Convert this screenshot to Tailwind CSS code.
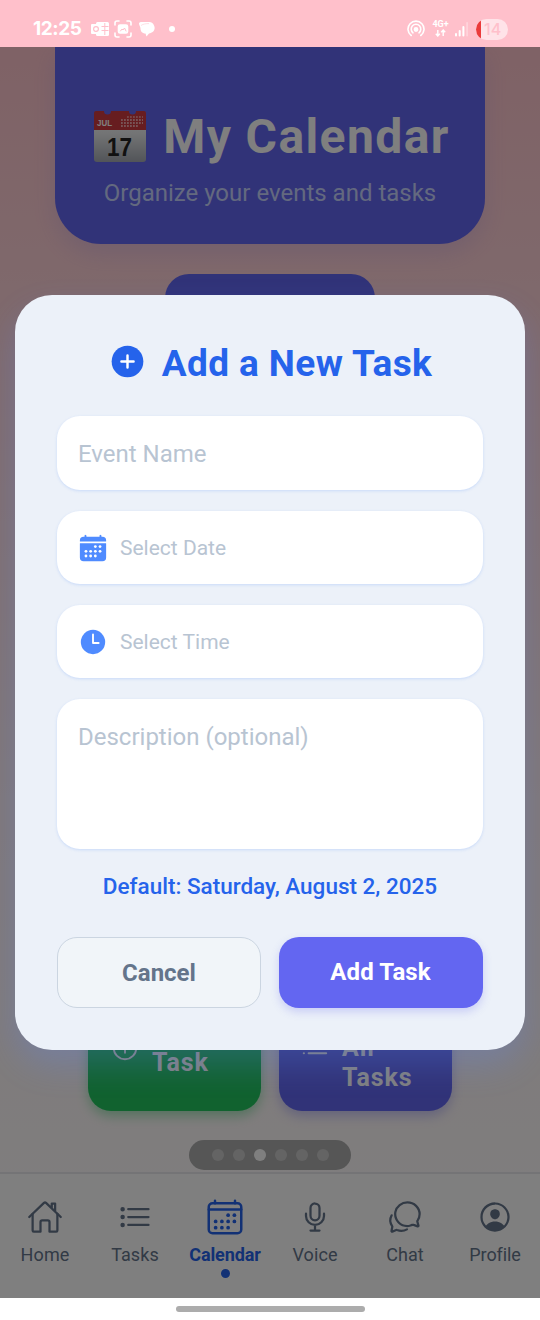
<!DOCTYPE html>
<html lang="en">
<head>
    <meta charset="UTF-8">
    <meta name="viewport" content="width=device-width, initial-scale=1.0">
    <title>My Calendar</title>
    <script src="https://cdn.jsdelivr.net/npm/@tailwindcss/browser@4"></script>
</head>
<body class="w-[540px] h-[1320px] overflow-hidden flex flex-col bg-white font-['Roboto',sans-serif]">

    <!-- Status bar -->
    <div class="h-[47px] shrink-0 bg-[#ffc0cb] flex items-center justify-between pl-[33px] pr-8 pt-[11px] text-white">
        <div class="flex items-center">
            <span class="w-[49px] text-[19px] leading-6 font-bold font-['Inter',sans-serif] tracking-[-0.4px] whitespace-nowrap">12:25</span>
            <svg class="ml-[9px] w-[18px] h-[18px]" viewBox="0 0 18 18" fill="none">
                <rect x="5" y="2" width="13" height="14" rx="1.5" fill="#fff"/>
                <rect x="0" y="4" width="10" height="10" rx="1" fill="#fff"/>
                <circle cx="5" cy="9" r="2.4" stroke="#ffc0cb" stroke-width="1.2"/>
                <path d="M10.5 6.5h7M10.5 10.5h7M13.8 3v12" stroke="#ffc0cb"/>
            </svg>
            <svg class="ml-[5px] w-[18px] h-[18px]" viewBox="0 0 18 18" fill="none" stroke="#fff" stroke-width="1.6" stroke-linecap="round">
                <path d="M1 5V3a2 2 0 012-2h2M13 1h2a2 2 0 012 2v2M17 13v2a2 2 0 01-2 2h-2M5 17H3a2 2 0 01-2-2v-2"/>
                <rect x="4.500" y="5" width="9" height="8" rx="1.500" fill="#fff"/>
                <path d="M6.500 11l1.500-2 1 1 1.500-2 1.500 3" stroke="#ffc0cb" stroke-width="1"/>
            </svg>
            <svg class="ml-[7px] w-[16px] h-[16px]" viewBox="0 0 16 16" fill="#fff">
                <path d="M3 1h7a5 5 0 015 3.500c2 4-1 7.500-5 8l-2.500 3-1-3C3 12.500 1.500 10 1.500 7.500 1.500 6 0 4 0 2.500 0 1.500 1 1 3 1z"/>
                <path d="M2 4.500C4 3 7 2.600 10 2.600" stroke="#ffc0cb" stroke-width=".5" fill="none"/>
            </svg>
            <span class="ml-[14px] size-[6px] rounded-full bg-white"></span>
        </div>
        <div class="flex items-center">
            <svg class="w-[18px] h-[18px]" viewBox="0 0 18 18" fill="none" stroke="#fff" stroke-width="1.6" stroke-linecap="round">
                <path d="M4.200 15.500A8 8 0 1113.800 15.500"/>
                <path d="M6 12.800A4.800 4.800 0 1112 12.800"/>
                <circle cx="9" cy="9.500" r="1.600" fill="#fff"/>
            </svg>
            <div class="ml-[7px] w-[17px] h-[18px] flex flex-col items-center">
                <span class="text-[9px] leading-[9px] font-bold whitespace-nowrap">4G+</span>
                <svg class="w-[11px] h-[8px]" viewBox="0 0 11 8" fill="none" stroke="#fff" stroke-width="1.400">
                    <path d="M2.800 1v6M.8 4.800l2 2.200 2-2.200M8.200 7V1M6.200 3.200l2-2.200 2 2.200"/>
                </svg>
            </div>
            <svg class="ml-[6px] w-[14px] h-[15px]" viewBox="0 0 14 15" fill="#fff">
                <rect x="0" y="11" width="2" height="3.500" rx="1"/>
                <rect x="3.700" y="8" width="2" height="6.500" rx="1"/>
                <rect x="7.400" y="4" width="2" height="10.500" rx="1"/>
                <rect x="11.300" y="0" width="1.600" height="14.500" rx=".8" opacity=".35"/>
            </svg>
            <div class="ml-[7px] w-8 h-[21px] rounded-full overflow-hidden bg-[#ffe3e8] flex">
                <span class="w-[5px] h-full bg-[#eb3b3b]"></span>
                <span class="flex-1 pl-[3px] text-[16px] leading-[21px] font-medium text-[#ffc0cb] font-['Inter',sans-serif]">14</span>
            </div>
        </div>
    </div>

    <div class="relative h-[1251px] shrink-0 overflow-hidden">

        <!-- Calendar page -->
        <div class="h-full flex flex-col bg-linear-to-b from-[#ffc4cc] via-[#fff0f2] via-60% to-white">
            <header class="mx-auto w-[430px] h-[197px] shrink-0 rounded-b-[46px] bg-[#6366f1] shadow-[0_10px_22px_rgba(99,102,241,0.15)] flex flex-col items-center pt-[61px]">
                <div class="flex items-center pl-[3px]">
                    <svg class="w-[54px] h-[54px] mr-4 -mt-0.5" viewBox="0 0 54 54">
                        <defs>
                            <linearGradient id="paper" x1="0" y1="0" x2="0" y2="1">
                                <stop offset="0" stop-color="#fff"/>
                                <stop offset=".4" stop-color="#e4e6e8"/>
                                <stop offset="1" stop-color="#a4a9b2"/>
                            </linearGradient>
                        </defs>
                        <rect x="1" y="8" width="52" height="45" rx="3" fill="url(#paper)"/>
                        <path d="M3 2H11A3.500 3.500 0 0018 2H36A3.500 3.500 0 0043 2H51Q53 2 53 4V21H1V4Q1 2 3 2z" fill="#ce3b40"/>
                        <path d="M28 11h22M28 14h22M28 17h17" stroke="#f1a7aa" stroke-width="1.800" stroke-dasharray="1.800 1.200"/>
                        <path d="M34 8h16" stroke="#f1a7aa" stroke-width="1.500" stroke-dasharray="1.800 1.200"/>
                        <text x="4" y="16.500" font-size="9" font-weight="700" fill="#fff" font-family="Liberation Sans" textLength="15" lengthAdjust="spacingAndGlyphs">JUL</text>
                        <text x="14" y="46.500" font-size="26" font-weight="700" fill="#222" font-family="Liberation Sans" textLength="25" lengthAdjust="spacingAndGlyphs">17</text>
                    </svg>
                    <h1 class="text-[48px] leading-[58px] font-bold text-white tracking-[1.4px] whitespace-nowrap">My Calendar</h1>
                </div>
                <p class="mt-[11px] text-[24px] leading-8 text-[#c7d2fe] whitespace-nowrap">Organize your events and tasks</p>
            </header>

            <div class="mx-auto mt-[30px] w-[210px] h-[60px] shrink-0 rounded-[24px] bg-[#6366f1]"></div>

            <div class="mt-auto mx-auto flex gap-[18px] text-[25px] leading-[30px] font-bold text-white tracking-[0.9px]">
                <div class="w-[173px] h-[128px] rounded-[23px] bg-[#22c55e] shadow-[0_5px_12px_rgba(34,197,94,0.4)] flex items-center pt-0.5 pl-[22px]">
                    <svg class="w-[30px] h-[30px] mr-3" viewBox="0 0 512 512" fill="none" stroke="#fff" stroke-width="32" stroke-linecap="round">
                        <circle cx="256" cy="256" r="192"/>
                        <path d="M256 176v160M336 256H176"/>
                    </svg>
                    <span>Add<br>Task</span>
                </div>
                <div class="w-[173px] h-[128px] rounded-[23px] bg-[#6366f1] shadow-[0_5px_12px_rgba(99,102,241,0.35)] flex items-center pt-0.5 pl-[20px]">
                    <svg class="w-[31px] h-[31px] mr-3 -mt-1" viewBox="0 0 512 512" fill="none" stroke="#fff" stroke-width="36" stroke-linecap="round">
                        <path d="M160 144h288M160 256h288M160 368h288M80 144h1M80 256h1M80 368h1"/>
                    </svg>
                    <span>View<br>All<br>Tasks</span>
                </div>
            </div>

            <div class="mt-[29px] mx-auto w-[162px] h-[30px] shrink-0 rounded-full bg-[#adadad] flex items-center justify-center gap-[9px]">
                <span class="size-3 rounded-full bg-[#c8c8c8]"></span>
                <span class="size-3 rounded-full bg-[#c8c8c8]"></span>
                <span class="size-3 rounded-full bg-white"></span>
                <span class="size-3 rounded-full bg-[#c8c8c8]"></span>
                <span class="size-3 rounded-full bg-[#c8c8c8]"></span>
                <span class="size-3 rounded-full bg-[#c8c8c8]"></span>
            </div>

            <!-- Tab bar -->
            <nav class="mt-[2px] h-[126px] shrink-0 border-t-2 border-[#e8e8ec] bg-white grid grid-cols-6 pt-[23px] text-[18px] leading-6 text-[#64748b] tracking-[0.1px]">
                <div class="flex flex-col items-center">
                    <div class="h-10 flex items-center">
                        <svg class="size-9" viewBox="0 0 512 512" fill="none" stroke="currentColor" stroke-width="32" stroke-linecap="round" stroke-linejoin="round">
                            <path d="M80 212v236a16 16 0 0016 16h96V328a24 24 0 0124-24h80a24 24 0 0124 24v136h96a16 16 0 0016-16V212"/>
                            <path d="M480 256L266.890 52c-5-5.280-16.690-5.340-21.780 0L32 256M400 179V64h-48v69"/>
                        </svg>
                    </div>
                    <span class="mt-[6px]">Home</span>
                </div>
                <div class="flex flex-col items-center">
                    <div class="h-10 flex items-center">
                        <svg class="size-9" viewBox="0 0 512 512" fill="none" stroke="currentColor" stroke-width="32" stroke-linecap="round" stroke-linejoin="round">
                            <path d="M160 144h288M160 256h288M160 368h288"/>
                            <circle cx="80" cy="144" r="16"/>
                            <circle cx="80" cy="256" r="16"/>
                            <circle cx="80" cy="368" r="16"/>
                        </svg>
                    </div>
                    <span class="mt-[6px]">Tasks</span>
                </div>
                <div class="flex flex-col items-center text-[#2563eb]">
                    <div class="h-10 flex items-center">
                        <svg class="size-10" viewBox="0 0 512 512" fill="none" stroke="currentColor" stroke-width="32" stroke-linecap="round" stroke-linejoin="round">
                            <rect x="48" y="80" width="416" height="384" rx="48"/>
                            <path d="M128 48v32M384 48v32M464 160H48"/>
                            <g fill="currentColor" stroke="none">
                                <circle cx="296" cy="232" r="24"/><circle cx="376" cy="232" r="24"/>
                                <circle cx="136" cy="312" r="24"/><circle cx="216" cy="312" r="24"/>
                                <circle cx="296" cy="312" r="24"/><circle cx="376" cy="312" r="24"/>
                                <circle cx="136" cy="392" r="24"/><circle cx="216" cy="392" r="24"/>
                                <circle cx="296" cy="392" r="24"/>
                            </g>
                        </svg>
                    </div>
                    <span class="mt-[6px] font-bold tracking-[-0.1px]">Calendar</span>
                    <span class="mt-[2px] size-[9px] rounded-full bg-[#2563eb]"></span>
                </div>
                <div class="flex flex-col items-center">
                    <div class="h-10 flex items-center">
                        <svg class="size-9" viewBox="0 0 512 512" fill="none" stroke="currentColor" stroke-width="32" stroke-linecap="round" stroke-linejoin="round">
                            <path d="M192 448h128M384 208v32c0 70.400-57.600 128-128 128h0c-70.400 0-128-57.600-128-128v-32M256 368v80"/>
                            <path d="M256 64a63.680 63.680 0 00-64 64v111c0 35.200 29 65 64 65s64-29 64-65V128c0-36-28-64-64-64z"/>
                        </svg>
                    </div>
                    <span class="mt-[6px]">Voice</span>
                </div>
                <div class="flex flex-col items-center">
                    <div class="h-10 flex items-center">
                        <svg class="size-9" viewBox="0 0 512 512" fill="none" stroke="currentColor" stroke-width="32" stroke-linecap="round" stroke-linejoin="round">
                            <path d="M431 320.600c-1-3.600 1.200-8.600 3.300-12.200a33.680 33.680 0 012.100-3.100A162 162 0 00464 215c.3-92.200-77.500-167-173.700-167-83.900 0-153.900 57.100-170.300 132.900a160.700 160.700 0 00-3.700 34.200c0 92.300 74.800 169.100 171 169.100 15.300 0 35.900-4.600 47.200-7.700s22.500-7.200 25.400-8.300a26.440 26.440 0 019.300-1.700 26 26 0 0110.100 2l56.700 20.100a13.520 13.520 0 003.900 1 8 8 0 008-8 12.850 12.850 0 00-.5-2.700z"/>
                            <path d="M66.460 232a146.230 146.230 0 006.390 152.670c2.310 3.490 3.610 6.190 3.210 8s-11.930 61.870-11.930 61.870a8 8 0 002.710 7.680A8.170 8.170 0 0072 464a7.260 7.260 0 002.910-.6l56.210-22a15.700 15.700 0 0112 .2c18.940 7.380 39.880 12 60.830 12A159.210 159.210 0 00284 432.110"/>
                        </svg>
                    </div>
                    <span class="mt-[6px]">Chat</span>
                </div>
                <div class="flex flex-col items-center">
                    <div class="h-10 flex items-center">
                        <svg class="size-9" viewBox="0 0 512 512" fill="currentColor">
                            <path d="M258.900 48C141.920 46.420 46.420 141.920 48 258.900c1.560 112.190 92.910 203.540 205.100 205.100 117 1.600 212.480-93.900 210.880-210.880C462.440 140.910 371.090 49.560 258.900 48zm126.420 327.250a4 4 0 01-6.140-.32 124.270 124.270 0 00-32.350-29.590C321.370 329 289.110 320 256 320s-65.370 9-90.830 25.340a124.240 124.240 0 00-32.350 29.580 4 4 0 01-6.140.32A175.320 175.320 0 0180 259c-1.630-97.310 78.220-178.760 175.570-179S432 158.810 432 256a175.320 175.320 0 01-46.680 119.250z"/>
                            <path d="M256 144c-19.720 0-37.550 7.390-50.220 20.820s-19 32-17.570 51.930C191.110 256 221.520 288 256 288s64.830-32 67.790-71.240c1.480-19.740-4.800-38.140-17.680-51.820C293.390 151.440 275.590 144 256 144z"/>
                        </svg>
                    </div>
                    <span class="mt-[6px] tracking-[-0.1px]">Profile</span>
                </div>
            </nav>
        </div>

        <!-- Add task modal -->
        <div class="absolute inset-0 bg-black/50 flex flex-col px-[15px] pt-[248px]">
            <div class="h-[755px] rounded-[37px] bg-[#ecf1f9] shadow-[0_16px_32px_rgba(96,140,255,0.24)] px-[42px] pt-[43px] flex flex-col">
                <div class="flex items-center justify-center h-[50px] pt-0.5">
                    <svg class="size-[39px] mr-[15px] -mt-1.5" viewBox="0 0 512 512">
                        <circle cx="256" cy="256" r="208" fill="#2563eb"/>
                        <path d="M256 176v160M336 256H176" stroke="#fff" stroke-width="32" stroke-linecap="round"/>
                    </svg>
                    <h2 class="text-[37px] leading-[50px] font-bold text-[#2563eb] tracking-[0.4px] whitespace-nowrap">Add a New Task</h2>
                </div>

                <div class="mt-[28px] h-[74px] rounded-[23px] bg-white shadow-[0_1px_3px_rgba(96,150,250,0.25)] flex items-center px-[21px] pt-0.5 text-[24px] text-[#b8c4d2] whitespace-nowrap">Event Name</div>

                <div class="mt-[21px] h-[73px] rounded-[23px] bg-white shadow-[0_1px_3px_rgba(96,150,250,0.25)] flex items-center px-[21px] text-[21px] text-[#b8c4d2]">
                    <svg class="size-[30px] mr-3" viewBox="0 0 512 512" fill="#4f8bff">
                        <path d="M480 128a64 64 0 00-64-64h-16V48.450c0-8.610-6.620-16-15.230-16.430A16 16 0 00368 48v16H144V48.450c0-8.610-6.600-16-15.230-16.430A16 16 0 00112 48v16H96a64 64 0 00-64 64v12a4 4 0 004 4h440a4 4 0 004-4zM32 416a64 64 0 0064 64h320a64 64 0 0064-64V179a3 3 0 00-3-3H35a3 3 0 00-3 3z"/>
                        <g fill="#fff">
                            <circle cx="296" cy="232" r="24"/><circle cx="376" cy="232" r="24"/>
                            <circle cx="136" cy="312" r="24"/><circle cx="216" cy="312" r="24"/>
                            <circle cx="296" cy="312" r="24"/><circle cx="376" cy="312" r="24"/>
                            <circle cx="136" cy="392" r="24"/><circle cx="216" cy="392" r="24"/>
                            <circle cx="296" cy="392" r="24"/>
                        </g>
                    </svg>
                    <span class="pt-0.5">Select Date</span>
                </div>

                <div class="mt-[21px] h-[73px] rounded-[23px] bg-white shadow-[0_1px_3px_rgba(96,150,250,0.25)] flex items-center px-[21px] text-[21px] text-[#b8c4d2]">
                    <svg class="size-[30px] mr-3" viewBox="0 0 512 512" fill="none">
                        <circle cx="256" cy="256" r="208" fill="#4f8bff"/>
                        <path d="M256 128v144h96" stroke="#fff" stroke-width="32" stroke-linecap="round" stroke-linejoin="round"/>
                    </svg>
                    <span class="pt-0.5">Select Time</span>
                </div>

                <div class="mt-[21px] h-[150px] rounded-[23px] bg-white shadow-[0_1px_3px_rgba(96,150,250,0.25)] px-[21px] pt-[22px] text-[24px] leading-8 text-[#b8c4d2] whitespace-nowrap">Description (optional)</div>

                <p class="mt-[21px] text-center text-[22.5px] leading-8 font-medium text-[#2563eb] whitespace-nowrap">Default: Saturday, August 2, 2025</p>

                <div class="mt-[35px] grid grid-cols-2 gap-[18px] text-[24px] font-bold">
                    <button class="h-[71px] rounded-[20px] border-[1.5px] border-[#cbd5e1] bg-[#f1f5f9] text-[#64748b]">Cancel</button>
                    <button class="h-[71px] rounded-[20px] bg-[#6366f1] text-white shadow-[0_4px_9px_rgba(99,102,241,0.25)] pb-0.5 pr-px tracking-[0.1px]">Add Task</button>
                </div>
            </div>
        </div>
    </div>

    <!-- Gesture bar -->
    <div class="flex-1 flex justify-center pt-[8px]">
        <span class="w-[189px] h-[6px] rounded-full bg-[#acacac]"></span>
    </div>
</body>
</html>
